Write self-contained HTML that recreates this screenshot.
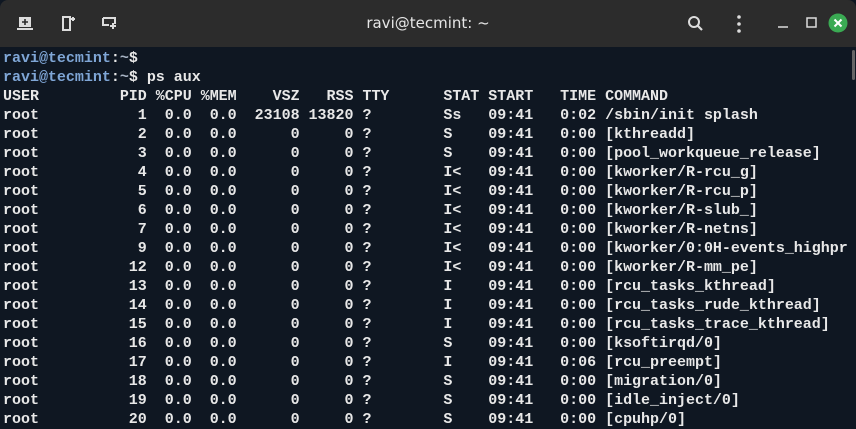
<!DOCTYPE html>
<html><head><meta charset="utf-8"><style>
html,body{margin:0;padding:0;width:856px;height:426px;overflow:hidden;background:#0f1722;}
.bar{position:absolute;left:0;top:0;width:856px;height:47px;background:#2c2c2c;border-radius:8px 8px 0 0;}
.title{position:absolute;left:0;width:856px;top:14px;text-align:center;color:#e6e6e6;font:15px "DejaVu Sans","Liberation Sans",sans-serif;}
.term{position:absolute;left:3px;top:49px;margin:0;font:15px/19px "Liberation Mono","DejaVu Sans Mono",monospace;letter-spacing:-0.015px;color:#e8e8e8;white-space:pre;font-weight:bold;}
.p{color:#7fa6d6;font-weight:bold}
.t{color:#a8b4c4}
.sb{position:absolute;left:852px;top:50px;width:3px;height:30px;background:#666;border-radius:2px}
</style></head><body>
<div class="bar">
<svg width="856" height="47" style="position:absolute;left:0;top:0">
 <g fill="none" stroke="#dcdcdc" stroke-width="2">
  <path d="M19 17h12v10h-12z" fill="#dcdcdc" stroke="none"/>
  <path d="M17 29h16" />
  <path d="M63 17h7v13h-7z"/>
  <path d="M71 19h4M73 17v4"/>
  <path d="M103 18h12v6M103 18v7h6"/>
  <path d="M110 26h6M113 23v6"/>
 </g>
 <path d="M22 22h6M25 19v6" stroke="#2c2c2c" stroke-width="1.6"/>
 <circle cx="694" cy="22" r="5" fill="none" stroke="#dcdcdc" stroke-width="2"/>
 <path d="M698 26l4 4" stroke="#dcdcdc" stroke-width="2.2"/>
 <circle cx="739" cy="17" r="1.8" fill="#dcdcdc"/><circle cx="739" cy="24" r="1.8" fill="#dcdcdc"/><circle cx="739" cy="31" r="1.8" fill="#dcdcdc"/>
 <path d="M778 27h10" stroke="#dcdcdc" stroke-width="1.5"/>
 <rect x="807" y="18" width="9" height="9" fill="none" stroke="#dcdcdc" stroke-width="1.5"/>
 <circle cx="838" cy="23" r="9.5" fill="#3aaa53"/>
 <path d="M834.5 19.5l7 7M841.5 19.5l-7 7" stroke="#fff" stroke-width="2"/>
</svg>
<div class="title">ravi@tecmint: ~</div>
</div>
<pre class="term"><span class="p">ravi@tecmint</span>:<span class="t">~</span>$
<span class="p">ravi@tecmint</span>:<span class="t">~</span>$ ps aux
USER         PID %CPU %MEM    VSZ   RSS TTY      STAT START   TIME COMMAND
root           1  0.0  0.0  23108 13820 ?        Ss   09:41   0:02 /sbin/init splash
root           2  0.0  0.0      0     0 ?        S    09:41   0:00 [kthreadd]
root           3  0.0  0.0      0     0 ?        S    09:41   0:00 [pool_workqueue_release]
root           4  0.0  0.0      0     0 ?        I&lt;   09:41   0:00 [kworker/R-rcu_g]
root           5  0.0  0.0      0     0 ?        I&lt;   09:41   0:00 [kworker/R-rcu_p]
root           6  0.0  0.0      0     0 ?        I&lt;   09:41   0:00 [kworker/R-slub_]
root           7  0.0  0.0      0     0 ?        I&lt;   09:41   0:00 [kworker/R-netns]
root           9  0.0  0.0      0     0 ?        I&lt;   09:41   0:00 [kworker/0:0H-events_highpr
root          12  0.0  0.0      0     0 ?        I&lt;   09:41   0:00 [kworker/R-mm_pe]
root          13  0.0  0.0      0     0 ?        I    09:41   0:00 [rcu_tasks_kthread]
root          14  0.0  0.0      0     0 ?        I    09:41   0:00 [rcu_tasks_rude_kthread]
root          15  0.0  0.0      0     0 ?        I    09:41   0:00 [rcu_tasks_trace_kthread]
root          16  0.0  0.0      0     0 ?        S    09:41   0:00 [ksoftirqd/0]
root          17  0.0  0.0      0     0 ?        I    09:41   0:06 [rcu_preempt]
root          18  0.0  0.0      0     0 ?        S    09:41   0:00 [migration/0]
root          19  0.0  0.0      0     0 ?        S    09:41   0:00 [idle_inject/0]
root          20  0.0  0.0      0     0 ?        S    09:41   0:00 [cpuhp/0]</pre>
<div class="sb"></div>
</body></html>
